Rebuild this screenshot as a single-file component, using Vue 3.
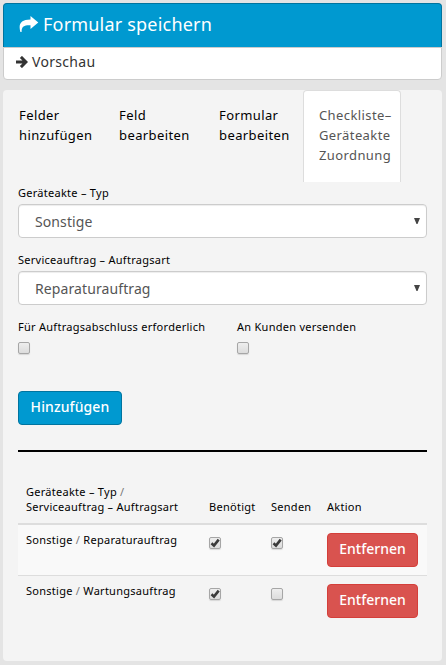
<script setup>
import { ref } from 'vue'

const tabs = [
  { lines: ['Felder', 'hinzufügen'] },
  { lines: ['Feld', 'bearbeiten'] },
  { lines: ['Formular', 'bearbeiten'] },
  { lines: ['Checkliste–', 'Geräteakte', 'Zuordnung'] },
]
const active = ref(3)
const selects = [
  { label: 'Geräteakte – Typ', value: 'Sonstige' },
  { label: 'Serviceauftrag – Auftragsart', value: 'Reparaturauftrag' },
]
const options = ref([
  { label: 'Für Auftragsabschluss erforderlich', on: false },
  { label: 'An Kunden versenden', on: false },
])
const rows = ref([
  { type: 'Sonstige', order: 'Reparaturauftrag', needed: true, send: true },
  { type: 'Sonstige', order: 'Wartungsauftrag', needed: true, send: false },
])
</script>

<template>
  <main class="page">
    <div class="actions">
      <div class="save">
        <svg class="share" width="20" height="18" viewBox="0 0 20 18"><path d="M11.500 1 19.300 7.500 11.500 14V10.300C6 10 2.400 11 2.600 17H1.400C-.8 9.500 1.500 4.600 11.500 4.600Z" fill="#fff" /></svg>
        <span>Formular speichern</span>
      </div>
      <div class="preview">
        <svg width="12" height="12" viewBox="0 0 12 12"><path d="M0 6h9.500M4.900.9 10 6l-5.100 5.100" fill="none" stroke="#333" stroke-width="2.900" /></svg>
        <span>Vorschau</span>
      </div>
    </div>

    <section class="panel">
      <nav class="tabs">
        <a v-for="(t, i) in tabs" :key="i" class="tab" :class="{ active: i === active }" @click="active = i">
          <span v-for="l in t.lines" :key="l">{{ l }}</span>
        </a>
      </nav>

      <div class="body">
        <div v-for="s in selects" :key="s.label" class="field">
          <span class="label">{{ s.label }}</span>
          <div class="select">
            <span>{{ s.value }}</span>
            <svg width="6" height="6" viewBox="0 0 6 6"><path d="M0 0h6L3.500 6h-1Z" fill="#444" /></svg>
          </div>
        </div>

        <div class="options">
          <label v-for="o in options" :key="o.label" class="option">
            <span class="label">{{ o.label }}</span>
            <input v-model="o.on" type="checkbox" class="check" />
          </label>
        </div>

        <button class="btn add">Hinzufügen</button>
        <div class="rule"></div>

        <div class="table">
          <div class="row head">
            <div class="name"><span>Geräteakte – Typ <i>/</i></span><span>Serviceauftrag – Auftragsart</span></div>
            <div>Benötigt</div>
            <div>Senden</div>
            <div>Aktion</div>
          </div>
          <div v-for="r in rows" :key="r.order" class="row item">
            <div>{{ r.type }} <i>/</i> {{ r.order }}</div>
            <div><span class="box"><input v-model="r.needed" type="checkbox" class="check" /><svg v-if="r.needed" class="tick" viewBox="0 0 12 12"><path d="M2.500 6.200 5 8.600 9.700 2.600" /></svg></span></div>
            <div><span class="box"><input v-model="r.send" type="checkbox" class="check" /><svg v-if="r.send" class="tick" viewBox="0 0 12 12"><path d="M2.500 6.200 5 8.600 9.700 2.600" /></svg></span></div>
            <div class="act"><button class="btn remove">Entfernen</button></div>
          </div>
        </div>
      </div>
    </section>
  </main>
</template>

<style>
body { background: #e4e4e4; }
</style>
<style scoped>
* { box-sizing: border-box; }
.page {
  width: 446px; height: 665px; padding: 3px 4px 4px 3px;
  background: #e4e4e4; color: #000;
  font-family: "Noto Sans", "Open Sans", sans-serif;
  display: flex; flex-direction: column; gap: 10px;
}
.actions { height: 77px; flex: none; }
.save {
  height: 44px; display: flex; align-items: center; padding: 0 0 3px 15px; gap: 5px;
  background: #0099d0; color: #fff; font-size: 18px; letter-spacing: .2px; line-height: 24px;
  border: 1px solid #00749f; border-bottom: 0; border-radius: 4px 4px 0 0;
}
.save span { margin-left: -1px; }
.share { flex: none; }
.preview {
  height: 33px; display: flex; align-items: center; gap: 4px; padding: 0 0 3px 12px;
  background: #fff; border: 1px solid #ccc; border-radius: 0 0 4px 4px;
  color: #333; font-size: 14px; line-height: 20px; letter-spacing: .3px;
}
.panel { flex: 1; background: #f4f4f4; border-radius: 4px; overflow: hidden; }
.tabs { display: flex; gap: 2px; height: 92px; }
.tab {
  width: 98px; padding: 14px 0 0 15px; border: 1px solid transparent; border-bottom: 0;
  display: flex; flex-direction: column; font-size: 13px; line-height: 20px; letter-spacing: .4px;
  white-space: nowrap; cursor: pointer;
}
.tab.active { background: #fff; color: #555; border-color: #ddd; border-radius: 4px 4px 0 0; }
.body { padding: 3px 15px 0; }
.field { height: 67px; }
.label { display: block; font-size: 11px; line-height: 15px; height: 19px; letter-spacing: .27px; white-space: nowrap; }
.select {
  height: 34px; display: flex; align-items: center; justify-content: space-between; padding: 0 6px 0 16px;
  background: #fff; border: 1px solid #ccc; border-radius: 4px; box-shadow: inset 0 1px 1px rgba(0,0,0,.075);
  color: #555; font-size: 14px; line-height: 20px; letter-spacing: .1px;
}
.select span { padding-top: 2px; }
.select svg { margin-bottom: 1px; }
.options { display: flex; height: 72px; }
.option { width: 219px; flex: none; }
.option:last-child { width: 190px; }
.option .label { height: 23px; }
.check {
  appearance: none; display: block; width: 12px; height: 12px; margin: 0;
  border: 1px solid #a6a6a6; border-radius: 2px; background: linear-gradient(#eee, #dcdcdc);
  box-shadow: 0 1px 1px rgba(0,0,0,.12);
}
.btn {
  display: block; height: 34px; padding: 0 0 2px; border-radius: 4px; color: #fff;
  font-family: inherit; font-size: 14px; font-weight: 500; line-height: 20px; letter-spacing: .1px; white-space: nowrap;
}
.add { width: 104px; background: #0099d0; border: 1px solid #00749f; }
.remove { width: 91px; background: #d9534f; border: 1px solid #d43f3a; letter-spacing: 0; }
.rule { height: 2px; margin: 25px 0 0; background: #000; }
.table { margin-top: 25px; font-size: 11px; line-height: 15px; letter-spacing: .27px; }
.row { display: grid; grid-template-columns: 183px 62px 56px 1fr; padding: 0 8px; white-space: nowrap; }
.row i { font-style: normal; color: #777; }
.head { height: 48px; border-bottom: 2px solid #ddd; align-items: end; padding-bottom: 9px; }
.name { display: flex; flex-direction: column; }
.item { height: 50px; padding-top: 8px; background: #f9f9f9; }
.item + .item { height: 51px; background: transparent; border-top: 1px solid #ddd; }
.item > div:first-child { margin-top: -1px; }
.box { display: block; position: relative; width: 12px; height: 12px; margin-top: 4px; }
.tick { position: absolute; left: 0; top: 0; width: 12px; height: 12px; pointer-events: none; }
.tick path { fill: none; stroke: #3b3b3b; stroke-width: 2.600; }
</style>
